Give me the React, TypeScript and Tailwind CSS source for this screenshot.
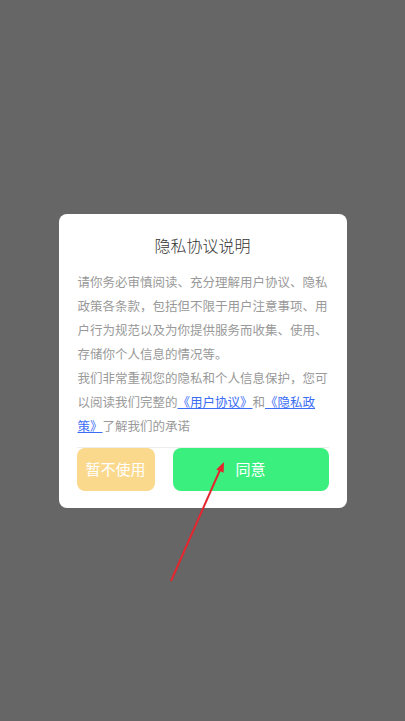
import React from 'react';

const font = { fontFamily: '"Noto Sans CJK SC", "Noto Sans", sans-serif' };

export default function App() {
  return (
    <div
      className="relative flex min-h-[721px] w-full items-center justify-center bg-[#666666]"
      style={font}
    >
      <div className="w-[288px] rounded-lg bg-white px-[18px] pt-[18px] pb-[17px]">
        <h2 className="text-center text-base font-light leading-[26px] text-[#333333]">隐私协议说明</h2>

        <div className="mt-3 pl-px text-[12.5px] leading-6 text-[#999999]">
          <p>请你务必审慎阅读、充分理解用户协议、隐私政策各条款，包括但不限于用户注意事项、用户行为规范以及为你提供服务而收集、使用、存储你个人信息的情况等。</p>
          <p>
            我们非常重视您的隐私和个人信息保护，您可以阅读我们完整的
            <a className="text-[#3a6cf4] underline">《用户协议》</a>和
            <a className="text-[#3a6cf4] underline">《隐私政策》</a>了解我们的承诺
          </p>
        </div>

        <div className="mt-[9px] border-t border-[#eeeeee]" />

        <div className="flex gap-[18px]">
          <button className="h-[43px] w-[78px] rounded-lg bg-[#fad98c] text-[15px] text-white">
            暂不使用
          </button>
          <button className="h-[43px] flex-1 rounded-lg bg-[#3bef7f] text-[15px] text-white">
            同意
          </button>
        </div>
      </div>

      {/* annotation arrow */}
      <svg className="pointer-events-none absolute left-0 top-0" width="405" height="721">
        <line x1="171" y1="581" x2="220" y2="470" stroke="#e5262e" strokeWidth="2" />
        <polygon points="224,462 223.6,472.7 216.3,469.5" fill="#e5262e" />
      </svg>
    </div>
  );
}
